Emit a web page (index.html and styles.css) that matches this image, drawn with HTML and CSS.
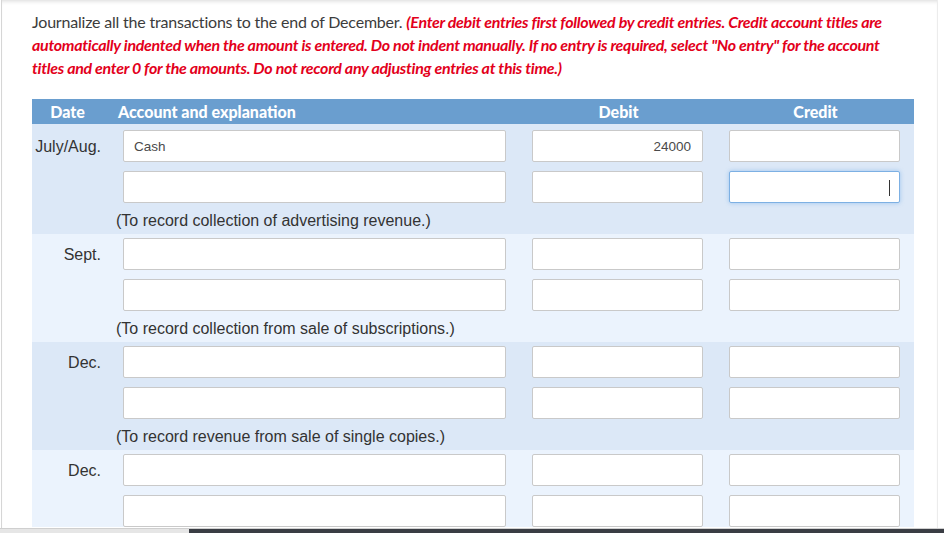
FILE: index.html
```html
<!DOCTYPE html>
<html>
	<head>
		<meta charset="UTF-8">
		<title>Journal entries</title>
		<link rel="stylesheet" href="styles.css">
	</head>
	<body>
		<div class="page">
			<p class="question">Journalize all the transactions to the end of December. <em>(Enter debit entries first followed by credit entries. Credit account titles are automatically indented when the amount is entered. Do not indent manually. If no entry is required, select "No entry" for the account titles and enter 0 for the amounts. Do not record any adjusting entries at this time.)</em></p>

			<div class="journal">
				<div class="head">
					<div class="h-date">Date</div>
					<div class="h-acct">Account and explanation</div>
					<div class="h-amt">Debit</div>
					<div class="h-amt">Credit</div>
				</div>

				<div class="entry dark first">
					<div class="line">
						<div class="date">July/Aug.</div>
						<div class="cell acct"><input type="text" value="Cash"></div>
						<div class="cell"><input type="text" class="num" value="24000"></div>
						<div class="cell"><input type="text" class="num"></div>
					</div>
					<div class="line">
						<div class="date"></div>
						<div class="cell acct"><input type="text"></div>
						<div class="cell"><input type="text" class="num"></div>
						<div class="cell"><span class="field"><input type="text" class="num focus"><span class="caret"></span></span></div>
					</div>
					<div class="explain">(To record collection of advertising revenue.)</div>
				</div>

				<div class="entry light">
					<div class="line">
						<div class="date">Sept.</div>
						<div class="cell acct"><input type="text"></div>
						<div class="cell"><input type="text" class="num"></div>
						<div class="cell"><input type="text" class="num"></div>
					</div>
					<div class="line">
						<div class="date"></div>
						<div class="cell acct"><input type="text"></div>
						<div class="cell"><input type="text" class="num"></div>
						<div class="cell"><input type="text" class="num"></div>
					</div>
					<div class="explain">(To record collection from sale of subscriptions.)</div>
				</div>

				<div class="entry dark">
					<div class="line">
						<div class="date">Dec.</div>
						<div class="cell acct"><input type="text"></div>
						<div class="cell"><input type="text" class="num"></div>
						<div class="cell"><input type="text" class="num"></div>
					</div>
					<div class="line">
						<div class="date"></div>
						<div class="cell acct"><input type="text"></div>
						<div class="cell"><input type="text" class="num"></div>
						<div class="cell"><input type="text" class="num"></div>
					</div>
					<div class="explain">(To record revenue from sale of single copies.)</div>
				</div>

				<div class="entry light">
					<div class="line">
						<div class="date">Dec.</div>
						<div class="cell acct"><input type="text"></div>
						<div class="cell"><input type="text" class="num"></div>
						<div class="cell"><input type="text" class="num"></div>
					</div>
					<div class="line">
						<div class="date"></div>
						<div class="cell acct"><input type="text"></div>
						<div class="cell"><input type="text" class="num"></div>
						<div class="cell"><input type="text" class="num"></div>
					</div>
				</div>
			</div>
		</div>
		<div class="scrollbar"><div class="thumb"></div></div>
	</body>
</html>
```

FILE: styles.css
```css
html,body {
	margin: 0;
	height: 533px;
	overflow: hidden;
	background: #fff;
}
.page {
	margin-left: 1px;
	margin-right: 6px;
	height: 533px;
	padding: 10px 0 0 30px;
	box-sizing: border-box;
	border-left: 1px solid #d6d6d6;
	border-right: 1px solid #ececec;
	box-shadow: inset 0 4px 4px -3px #d8d8d8;
}
.question {
	margin: 0;
	width: 875px;
	font-family: Lato, "Liberation Sans", sans-serif;
	font-size: 16px;
	line-height: 23px;
	color: #3c3c3c;
	letter-spacing: -0.2px;
}
.question em {
	color: #e3001b;
	font-weight: 700;
	letter-spacing: -0.3px;
}
.journal {
	margin-top: 20px;
	width: 882px;
	font-family: "Liberation Sans", Arial, sans-serif;
}
.head,.line {
	display: grid;
	grid-template-columns: 81px 407px 197px 197px;
}
.head {
	height: 25px;
	line-height: 25px;
	background-color: #6a9ecf;
	color: #fff;
	font-family: Lato, sans-serif;
	font-weight: 900;
	font-size: 16px;
}
.h-date,.h-amt {
	text-align: center;
}
.h-date {
	padding-right: 10px;
}
.h-acct {
	padding-left: 5px;
}
.entry {
	padding-top: 4px;
}
.entry.first {
	padding-top: 6px;
}
.dark {
	background-color: #dce8f7;
}
.light {
	background-color: #ebf3fd;
}
.line {
	height: 32px;
	margin-bottom: 9px;
}
.date {
	text-align: right;
	padding-right: 12px;
	font-size: 16px;
	line-height: 33px;
	color: #333;
}
.cell {
	padding-left: 12px;
}
.cell.acct {
	padding-left: 10px;
}
input {
	box-sizing: border-box;
	width: 171px;
	height: 32px;
	margin: 0;
	padding: 0 10px;
	border: 1px solid #c9c9c9;
	border-radius: 2px;
	background: #fff;
	font-family: "Liberation Sans", Arial, sans-serif;
	font-size: 13.5px;
	color: #4a4a4a;
	outline: none;
}
.acct input {
	width: 383px;
}
.num {
	text-align: right;
	padding-right: 11px;
}
.field {
	position: relative;
	display: inline-block;
}
.focus {
	border-color: #7db0e3;
	box-shadow: 0 0 4px rgba(102, 165, 230, 0.55);
}
.caret {
	position: absolute;
	right: 10px;
	top: 9px;
	width: 1px;
	height: 16px;
	background: #333;
}
.explain {
	margin-top: -1px;
	padding: 0 0 3px 84px;
	font-size: 16px;
	line-height: 20px;
	color: #333;
}
.scrollbar {
	position: fixed;
	left: 0;
	right: 0;
	bottom: 0;
	height: 4px;
	background: #e6e6e6;
	border-top: 1px solid #cfcfcf;
}
.thumb {
	margin-left: 189px;
	height: 4px;
	background: #3a3d44;
}
```
